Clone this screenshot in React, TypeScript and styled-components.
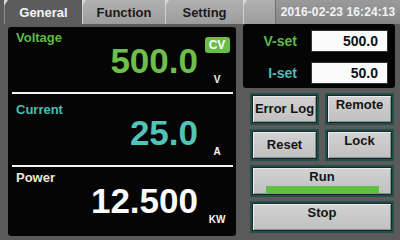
import styled, { createGlobalStyle } from 'styled-components';

const GlobalStyle = createGlobalStyle`
  html, body {
    margin: 0;
    padding: 0;
    background: #5a5a5a;
  }
  body {
    font-family: "Liberation Sans", Arial, sans-serif;
    font-weight: bold;
  }
`;

const Screen = styled.div`
  width: 400px;
  height: 240px;
  background: #5a5a5a;
  overflow: hidden;
`;

const TabBar = styled.div`
  display: flex;
  height: 24px;
  padding-left: 4px;
`;

const Tab = styled.div<{ $active?: boolean; $w: number }>`
  position: relative;
  width: ${({ $w }) => $w}px;
  display: flex;
  align-items: center;
  justify-content: center;
  font-size: 13px;
  color: ${({ $active }) => ($active ? '#f4f4f4' : '#1a1a1a')};
  background: ${({ $active }) =>
    $active ? '#5c5c5c' : 'linear-gradient(#b0b0b0, #9d9d9d)'};
  border-left: 1px solid ${({ $active }) => ($active ? '#8e8e8e' : '#cfcfcf')};
  border-radius: 4px 0 0 0;
  box-sizing: border-box;

  &::before {
    content: '';
    position: absolute;
    left: -1px;
    top: 0;
    border-top: 6px solid #d8d8d8;
    border-right: 4px solid transparent;
  }
`;

const Clock = styled.div`
  flex: 1;
  display: flex;
  align-items: center;
  justify-content: center;
  font-size: 12px;
  color: #f2f2f2;
  background: linear-gradient(#9a9a9a, #868686);
  border-left: 1px solid #6e6e6e;
  letter-spacing: 0.1px;
`;

const Body = styled.div`
  display: grid;
  grid-template-columns: 228px 152px;
  column-gap: 7px;
  padding-left: 8px;
`;

const MeterPanel = styled.div`
  margin-top: 3px;
  height: 209px;
  background: #050505;
  border-radius: 3px;
  display: flex;
  flex-direction: column;
`;

const Divider = styled.div`
  height: 2px;
  margin: 0 3px 0 4px;
  background: #f4f4f4;
`;

const Meter = styled.div<{ $h: number; $pt: number }>`
  height: ${({ $h }) => $h}px;
  box-sizing: border-box;
  padding: ${({ $pt }) => $pt}px 0 0 8px;
  display: grid;
  grid-template-columns: 1fr 38px;
  grid-template-rows: 17px 28px 10px;
`;

const MeterLabel = styled.div<{ $color: string }>`
  grid-column: 1;
  grid-row: 1;
  font-size: 13px;
  line-height: 15px;
  color: ${({ $color }) => $color};
`;

const MeterValue = styled.div<{ $color: string }>`
  grid-column: 1;
  grid-row: 2;
  text-align: right;
  font-size: 35px;
  line-height: 28px;
  color: ${({ $color }) => $color};
`;

const Unit = styled.div`
  grid-column: 2;
  grid-row: 3;
  text-align: center;
  font-size: 10px;
  line-height: 10px;
  color: #f4f4f4;
`;

const Badge = styled.div`
  grid-column: 2;
  grid-row: 1 / 3;
  align-self: start;
  justify-self: center;
  margin-top: 7px;
  width: 25px;
  height: 16px;
  border-radius: 3px;
  background: #69bd48;
  color: #fff;
  font-size: 12px;
  line-height: 16px;
  text-align: center;
`;

const RightCol = styled.div`
  display: flex;
  flex-direction: column;
`;

const SetPanel = styled.div`
  height: 64px;
  box-sizing: border-box;
  background: #050505;
  border-radius: 3px;
  padding: 6px 7px 0 0;
  display: grid;
  grid-template-columns: 54px 77px;
  grid-auto-rows: 22px;
  column-gap: 14px;
  row-gap: 10px;
`;

const SetLabel = styled.div<{ $color: string }>`
  font-size: 14px;
  line-height: 22px;
  text-align: right;
  color: ${({ $color }) => $color};
`;

const SetInput = styled.div`
  background: #fbfbfb;
  border: 1px solid #333;
  box-sizing: border-box;
  padding-right: 9px;
  text-align: right;
  font-size: 14px;
  line-height: 20px;
  color: #111;
`;

const ButtonGrid = styled.div`
  display: grid;
  grid-template-columns: 1fr 1fr;
  grid-auto-rows: 32px;
  column-gap: 6px;
  row-gap: 4px;
  padding: 5px 1px 0 7px;
`;

const Frame = styled.div<{ $wide?: boolean }>`
  grid-column: ${({ $wide }) => ($wide ? '1 / 3' : 'auto')};
  border: 2px solid #214f49;
  background: #142a27;
  padding: 1px;
  display: flex;
`;

const Button = styled.div<{ $top?: boolean }>`
  flex: 1;
  display: flex;
  flex-direction: column;
  align-items: center;
  justify-content: ${({ $top }) => ($top ? 'flex-start' : 'center')};
  padding-top: ${({ $top }) => ($top ? '2px' : '0')};
  background: linear-gradient(#d2d2d2, #c0c0c0);
  box-shadow: inset 1px 1px 0 #ececec, inset -1px -1px 0 #8e8e8e;
  font-size: 13px;
  line-height: 14px;
  color: #141414;
`;

const RunBar = styled.div`
  margin-top: 2px;
  width: 113px;
  height: 7px;
  flex-shrink: 0;
  background: #5cc040;
`;

export default function App() {
  return (
    <>
      <GlobalStyle />
      <Screen>
        <TabBar>
          <Tab $active $w={78}>General</Tab>
          <Tab $w={83}>Function</Tab>
          <Tab $w={78}>Setting</Tab>
          <Tab $w={32} />
          <Clock>2016-02-23 16:24:13</Clock>
        </TabBar>
        <Body>
          <MeterPanel>
            <Meter $h={65} $pt={3}>
              <MeterLabel $color="#5dbb45">Voltage</MeterLabel>
              <Badge>CV</Badge>
              <MeterValue $color="#6cc04a">500.0</MeterValue>
              <Unit>V</Unit>
            </Meter>
            <Divider />
            <Meter $h={71} $pt={8}>
              <MeterLabel $color="#4cbdb4">Current</MeterLabel>
              <MeterValue $color="#52c3ba">25.0</MeterValue>
              <Unit>A</Unit>
            </Meter>
            <Divider />
            <Meter $h={69} $pt={3}>
              <MeterLabel $color="#efe9d4">Power</MeterLabel>
              <MeterValue $color="#fafafa">12.500</MeterValue>
              <Unit>KW</Unit>
            </Meter>
          </MeterPanel>
          <RightCol>
            <SetPanel>
              <SetLabel $color="#5dbb45">V-set</SetLabel>
              <SetInput>500.0</SetInput>
              <SetLabel $color="#4cbdb4">I-set</SetLabel>
              <SetInput>50.0</SetInput>
            </SetPanel>
            <ButtonGrid>
              <Frame><Button>Error Log</Button></Frame>
              <Frame><Button $top>Remote</Button></Frame>
              <Frame><Button>Reset</Button></Frame>
              <Frame><Button $top>Lock</Button></Frame>
              <Frame $wide>
                <Button $top>
                  Run
                  <RunBar />
                </Button>
              </Frame>
              <Frame $wide><Button $top>Stop</Button></Frame>
            </ButtonGrid>
          </RightCol>
        </Body>
      </Screen>
    </>
  );
}
